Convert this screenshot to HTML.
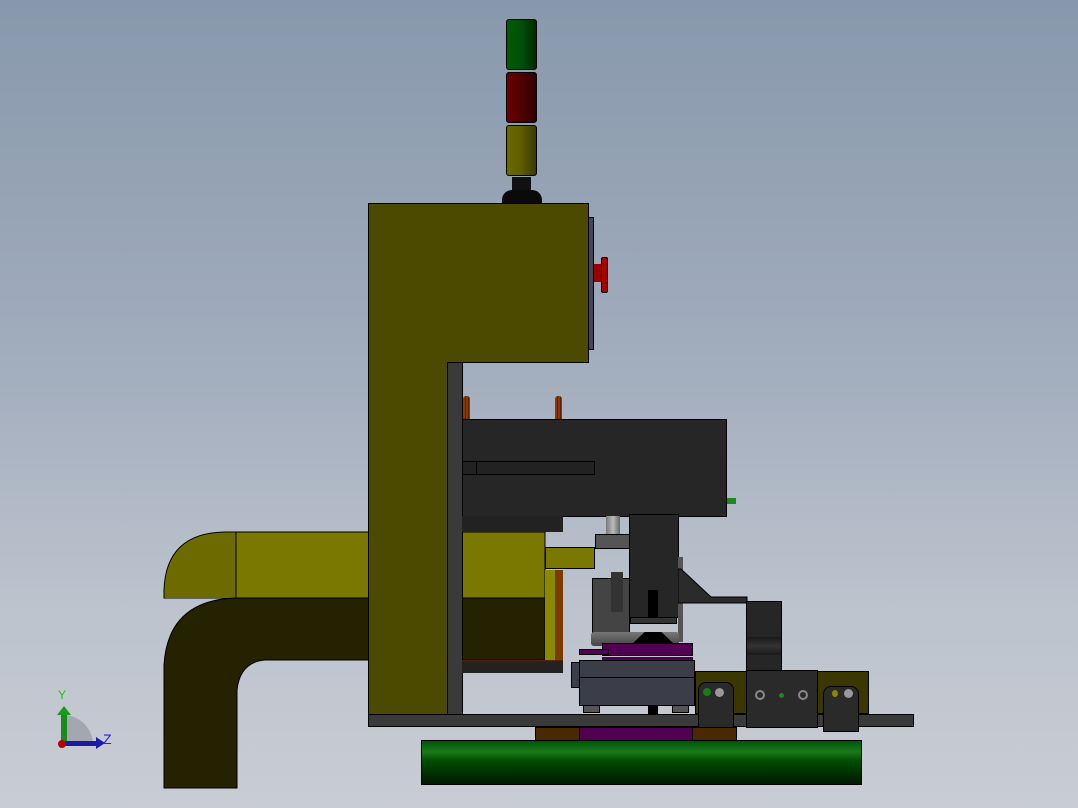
<!DOCTYPE html>
<html><head><style>
html,body{margin:0;padding:0}
body{width:1078px;height:808px;position:relative;overflow:hidden;background:linear-gradient(#8898ac 0%,#a2adbd 45%,#bcc3cd 75%,#c9ccd4 100%);font-family:"Liberation Sans",sans-serif}
.a{position:absolute;box-sizing:border-box}
.k{border:1px solid #000}
</style></head><body>
<!-- duct (behind body) -->
<svg class="a" style="left:160px;top:528px" width="400" height="265" viewBox="160 528 400 265">
<path d="M164,598 L164,590 Q166,533 225,532 L545,532 L545,598 Z" fill="#7a7800" stroke="#000"/>
<path d="M165,590 Q167,534 225,533 L236,533 L236,598 L165,598Z" fill="#6d6b00"/>
<line x1="236" y1="532" x2="236" y2="598" stroke="#000"/>
<path d="M164,788 L164,665 Q168,600 236,598 L545,598 L545,660 L265,660 Q240,662 237,690 L237,788 Z" fill="#242200" stroke="#000"/>
</svg>
<!-- light tower -->
<div class="a k" style="left:506px;top:19px;width:31px;height:51px;background:linear-gradient(90deg,#005a00,#00500a 50%,#002a00);border-radius:3px"></div>
<div class="a k" style="left:506px;top:72px;width:31px;height:51px;background:linear-gradient(90deg,#6a0000,#500000 50%,#300000);border-radius:3px"></div>
<div class="a k" style="left:506px;top:125px;width:31px;height:51px;background:linear-gradient(90deg,#6b6a00,#5e5c00 50%,#3a3900);border-radius:3px"></div>
<div class="a" style="left:512px;top:177px;width:19px;height:14px;background:#111"></div>
<div class="a" style="left:502px;top:190px;width:40px;height:14px;background:#0a0a0a;border-radius:10px 10px 0 0"></div>
<!-- main olive body -->
<svg class="a" style="left:0;top:0" width="1078" height="808">
<path d="M368.5,203.5 L588.5,203.5 L588.5,362.5 L447.5,362.5 L447.5,714.5 L368.5,714.5 Z" fill="#4b4a00" stroke="#000"/>
</svg>
<!-- side panel & button -->
<div class="a k" style="left:588px;top:217px;width:6px;height:133px;background:#45465a"></div>
<div class="a" style="left:594px;top:264px;width:8px;height:18px;background:#900"></div>
<div class="a k" style="left:601px;top:257px;width:7px;height:36px;background:#a00;border-radius:2px"></div>
<!-- dark vertical plate -->
<div class="a k" style="left:447px;top:362px;width:16px;height:356px;background:#3a3a3a"></div>
<!-- pins -->
<div class="a" style="left:463px;top:396px;width:7px;height:23px;background:repeating-linear-gradient(90deg,#8a3a00 0 2px,#5a2000 2px 3px);border-radius:3px 3px 0 0"></div>
<div class="a" style="left:555px;top:396px;width:7px;height:23px;background:repeating-linear-gradient(90deg,#8a3a00 0 2px,#5a2000 2px 3px);border-radius:3px 3px 0 0"></div>
<!-- dark box -->
<div class="a k" style="left:462px;top:419px;width:265px;height:98px;background:#262626"></div>
<div class="a k" style="left:462px;top:461px;width:133px;height:14px;background:#222"></div>
<div class="a" style="left:476px;top:461px;width:1px;height:14px;background:#000"></div>
<div class="a" style="left:727px;top:498px;width:9px;height:6px;background:#1a8a1a"></div>
<div class="a" style="left:462px;top:516px;width:101px;height:16px;background:#222"></div>
<div class="a k" style="left:545px;top:547px;width:50px;height:22px;background:#7a7800"></div>
<div class="a" style="left:545px;top:570px;width:18px;height:90px;background:linear-gradient(90deg,#8a8a00 0 10px,#7a3a00 10px)"></div>
<div class="a" style="left:462px;top:660px;width:101px;height:13px;background:#222;border-top:1px solid #5a2000"></div>
<!-- mechanism -->
<div class="a" style="left:606px;top:516px;width:14px;height:20px;background:linear-gradient(90deg,#777,#bbb,#666)"></div>
<div class="a k" style="left:595px;top:534px;width:36px;height:15px;background:#555"></div>
<div class="a k" style="left:592px;top:578px;width:38px;height:64px;background:#444"></div>
<div class="a" style="left:611px;top:572px;width:12px;height:40px;background:#333"></div>
<div class="a k" style="left:629px;top:514px;width:50px;height:104px;background:#262626"></div>
<div class="a" style="left:648px;top:590px;width:10px;height:30px;background:#000"></div>
<div class="a k" style="left:630px;top:617px;width:47px;height:7px;background:#333"></div>
<div class="a" style="left:678px;top:557px;width:5px;height:85px;background:#555"></div>
<svg class="a" style="left:678px;top:565px" width="110" height="40"><path d="M0,4 L3,4 L33,32 L69,32 L69,38 L0,38Z" fill="#2b2b2b" stroke="#000"/></svg>
<div class="a" style="left:591px;top:632px;width:88px;height:14px;background:linear-gradient(#777,#444);border-radius:3px"></div>
<div class="a" style="left:632px;top:632px;width:42px;height:12px;background:#000;clip-path:polygon(30% 0,70% 0,100% 100%,0 100%)"></div>
<div class="a k" style="left:602px;top:643px;width:91px;height:13px;background:#520052"></div>
<div class="a k" style="left:579px;top:649px;width:30px;height:6px;background:#520052"></div>
<div class="a" style="left:602px;top:657px;width:91px;height:4px;background:#520052"></div>
<div class="a k" style="left:571px;top:662px;width:9px;height:26px;background:#3b3e48"></div>
<div class="a k" style="left:579px;top:660px;width:116px;height:46px;background:#3b3e48"></div>
<div class="a" style="left:580px;top:677px;width:114px;height:1px;background:#000"></div>
<div class="a k" style="left:583px;top:705px;width:17px;height:8px;background:#555"></div>
<div class="a k" style="left:672px;top:705px;width:17px;height:8px;background:#555"></div>
<div class="a" style="left:648px;top:705px;width:10px;height:9px;background:#000"></div>
<!-- right arm -->
<div class="a k" style="left:746px;top:601px;width:36px;height:71px;background:#262626"></div>
<div class="a" style="left:747px;top:637px;width:34px;height:18px;background:linear-gradient(#1a1a1a,#333,#1a1a1a)"></div>
<div class="a k" style="left:695px;top:671px;width:174px;height:43px;background:#3a3800"></div>
<div class="a k" style="left:746px;top:670px;width:72px;height:58px;background:#2a2a2a"></div>
<div class="a k" style="left:698px;top:682px;width:36px;height:46px;background:#2a2a2a;border-radius:8px 8px 0 0"></div>
<div class="a k" style="left:823px;top:686px;width:36px;height:46px;background:#2a2a2a;border-radius:8px 8px 0 0"></div>
<div class="a" style="left:703px;top:688px;width:8px;height:8px;border-radius:50%;background:#1a7a1a"></div>
<div class="a" style="left:715px;top:688px;width:9px;height:9px;border-radius:50%;background:#999"></div>
<div class="a" style="left:832px;top:690px;width:6px;height:7px;border-radius:50%;background:#888800"></div>
<div class="a" style="left:844px;top:689px;width:9px;height:9px;border-radius:50%;background:#999"></div>
<div class="a" style="left:755px;top:690px;width:10px;height:10px;border-radius:50%;border:2px solid #888;box-sizing:border-box"></div>
<div class="a" style="left:798px;top:690px;width:10px;height:10px;border-radius:50%;border:2px solid #888;box-sizing:border-box"></div>
<div class="a" style="left:779px;top:693px;width:5px;height:5px;border-radius:50%;background:#1a8a1a"></div>
<!-- base bar -->
<div class="a k" style="left:368px;top:714px;width:546px;height:13px;background:#3a3a3a"></div>
<div class="a k" style="left:698px;top:714px;width:36px;height:14px;background:#2a2a2a;border-top:none"></div>
<div class="a k" style="left:746px;top:714px;width:72px;height:14px;background:#2a2a2a;border-top:none"></div>
<div class="a k" style="left:823px;top:714px;width:36px;height:18px;background:#2a2a2a;border-top:none"></div>
<!-- pads -->
<div class="a k" style="left:535px;top:727px;width:45px;height:14px;background:#4a2800"></div>
<div class="a k" style="left:692px;top:727px;width:45px;height:14px;background:#4a2800"></div>
<div class="a k" style="left:579px;top:727px;width:114px;height:14px;background:#520052"></div>
<!-- green cylinder -->
<div class="a k" style="left:421px;top:740px;width:441px;height:45px;background:linear-gradient(#00550a 0%,#1a7a1a 25%,#005000 45%,#002a00 80%,#001a00)"></div>
<!-- triad -->
<div class="a" style="left:63px;top:715px;width:30px;height:30px;background:#9a9fa8;border-radius:0 30px 0 0;opacity:.8"></div>
<div class="a" style="left:61px;top:712px;width:6px;height:33px;background:#1a8a1a"></div>
<div class="a" style="left:57px;top:706px;width:0;height:0;border-left:7px solid transparent;border-right:7px solid transparent;border-bottom:9px solid #1a9a1a"></div>
<div class="a" style="left:63px;top:741px;width:34px;height:5px;background:#1a1aa0"></div>
<div class="a" style="left:96px;top:737px;width:0;height:0;border-top:6px solid transparent;border-bottom:6px solid transparent;border-left:9px solid #1a1ab0"></div>
<div class="a" style="left:58px;top:740px;width:8px;height:8px;border-radius:50%;background:#b00"></div>
<div class="a" style="left:58px;top:688px;color:#1c1;font-size:12px">Y</div>
<div class="a" style="left:103px;top:731px;color:#22e;font-size:14px">Z</div>
</body></html>
